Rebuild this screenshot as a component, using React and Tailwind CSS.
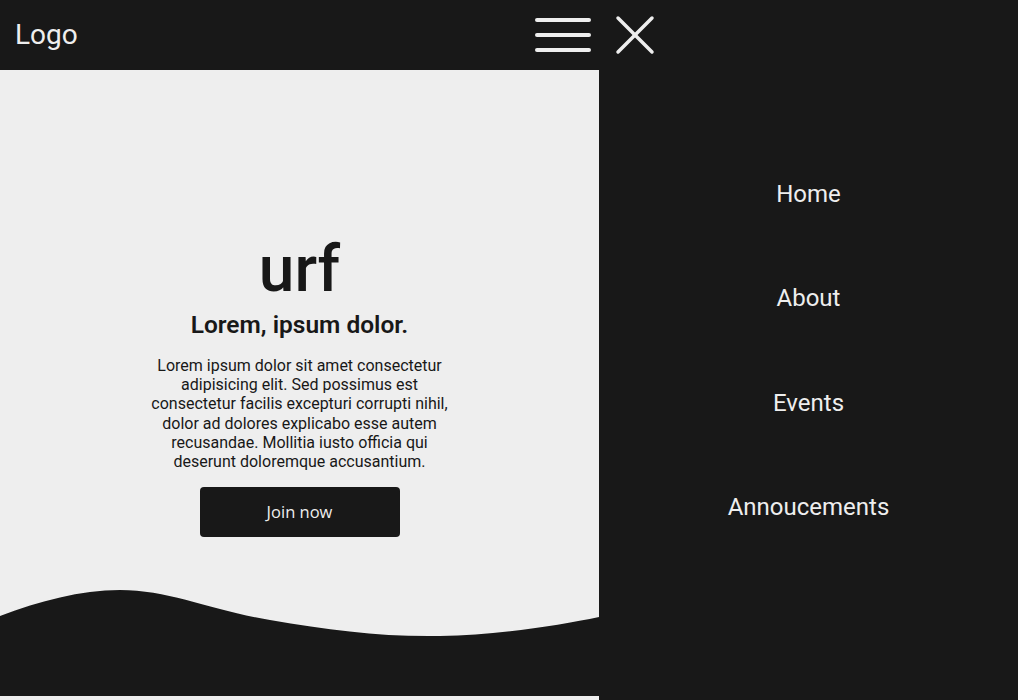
const navLinks = ["Home", "About", "Events", "Annoucements"]

function Hamburger() {
    return (
        <svg width="60" height="40" viewBox="0 0 60 40" className="block">
            <g stroke="#eeeeee" strokeWidth="4" strokeLinecap="round">
                <line x1="4" y1="5" x2="56" y2="5" />
                <line x1="4" y1="20" x2="56" y2="20" />
                <line x1="4" y1="35" x2="56" y2="35" />
            </g>
        </svg>
    )
}

function CloseIcon() {
    return (
        <svg width="40" height="40" viewBox="0 0 40 40" className="block">
            <g stroke="#eeeeee" strokeWidth="3.5" strokeLinecap="round">
                <line x1="3" y1="3" x2="37" y2="37" />
                <line x1="37" y1="3" x2="3" y2="37" />
            </g>
        </svg>
    )
}

function Wave() {
    return (
        <svg width="599" height="111" viewBox="0 0 599 111" preserveAspectRatio="none" className="block">
            <path
                d="M0 31 C 40 16, 80 5, 120 5 C 170 5, 210 25, 270 35 C 330 45, 380 52, 440 51 C 500 50, 560 40, 599 32 L 599 111 L 0 111 Z"
                fill="#181818"
            />
        </svg>
    )
}

export default function App() {
    return (
        <div className="w-[1018px] h-[700px] overflow-hidden bg-[#181818] font-['Roboto',sans-serif]">
            <header className="h-[70px] flex items-center">
                <div className="w-[668px] flex items-center justify-between pl-[15px] pr-[13px]">
                    <span className="text-[28px] text-[#eeeeee] leading-none">Logo</span>
                    <div className="flex items-center gap-[22px]">
                        <Hamburger />
                        <CloseIcon />
                    </div>
                </div>
            </header>

            <div className="flex h-[630px]">
                <main className="w-[599px] flex flex-col bg-[#eeeeee]">
                    <section className="flex flex-col items-center text-[#181818] pt-[168px] h-[515px]">
                        <h1 className="text-[64px] font-medium leading-[64px]">urf</h1>
                        <h2 className="text-[24.5px] font-semibold leading-[30px] mt-[8px]">Lorem, ipsum dolor.</h2>
                        <p className="w-[300px] text-center text-[16px] leading-[19.2px] mt-[16px]">
                            Lorem ipsum dolor sit amet consectetur adipisicing elit. Sed possimus est consectetur
                            facilis excepturi corrupti nihil, dolor ad dolores explicabo esse autem recusandae.
                            Mollitia iusto officia qui deserunt doloremque accusantium.
                        </p>
                        <button className="mt-[16px] w-[200px] h-[50px] rounded-[4px] bg-[#181818] text-[#eeeeee] text-[16.5px] font-['Open_Sans',sans-serif]">
                            Join now
                        </button>
                    </section>
                    <Wave />
                    <div className="h-[4px]"></div>
                </main>

                <nav className="flex-1 flex flex-col items-center pt-[106px] text-[#eeeeee] text-[24px]">
                    {navLinks.map((link) => (
                        <a key={link} className="h-[104.4px] leading-[36px]">
                            {link}
                        </a>
                    ))}
                </nav>
            </div>
        </div>
    )
}
